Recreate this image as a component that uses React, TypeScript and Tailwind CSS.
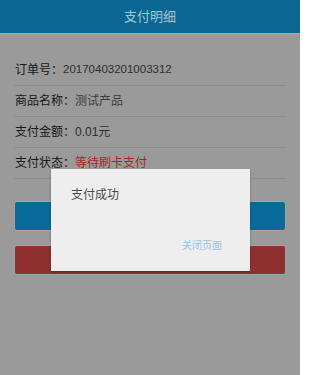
const rows = [
  { label: "订单号：", value: "20170403201003312", color: "text-[#2e2e2e] text-[11.5px]" },
  { label: "商品名称：", value: "测试产品", color: "text-[#3c3c3c]" },
  { label: "支付金额：", value: "0.01元", color: "text-[#2e2e2e]" },
  { label: "支付状态：", value: "等待刷卡支付", color: "text-[#a42a1a]" },
];

export default function App() {
  return (
    <div
      className="relative w-[300px] h-[375px] overflow-hidden bg-[#9a9a9a]"
      style={{ fontFamily: '"Liberation Sans", "Noto Sans CJK SC", sans-serif' }}
    >
      {/* Header */}
      <div className="h-[34px] flex items-center justify-center bg-[#0a6794] border-b border-[#a9a9a9]">
        <span className="text-[13px] text-[#a9c3d2]">支付明细</span>
      </div>

      {/* Details */}
      <div className="px-[14px] pt-[21px]">
        {rows.map((r) => (
          <div
            key={r.label}
            className="h-[31px] flex items-center pl-[1px] border-b border-[#8d8d8d] text-[12px]"
          >
            <span className="text-[#161616]">{r.label}</span>
            <span className={r.color}>{r.value}</span>
          </div>
        ))}

        <div className="mt-[22px] h-[30px] rounded-[3px] bg-[#076a98] border border-[#b39c9c]" />
        <div className="mt-[14px] h-[30px] rounded-[3px] bg-[#8f3030] border border-[#93a8a8]" />
      </div>

      {/* Dialog */}
      <div className="absolute left-[51px] top-[169px] w-[199px] h-[102px] bg-[#eeeeee] shadow-[0_1px_2px_rgba(0,0,0,0.3)] flex flex-col justify-between pt-[17px] pb-[18px]">
        <span className="pl-[20px] text-[12px] text-[#4a4a4a]">支付成功</span>
        <span className="self-end pr-[28px] text-[10px] text-[#8fc6e6]">关闭页面</span>
      </div>
    </div>
  );
}
